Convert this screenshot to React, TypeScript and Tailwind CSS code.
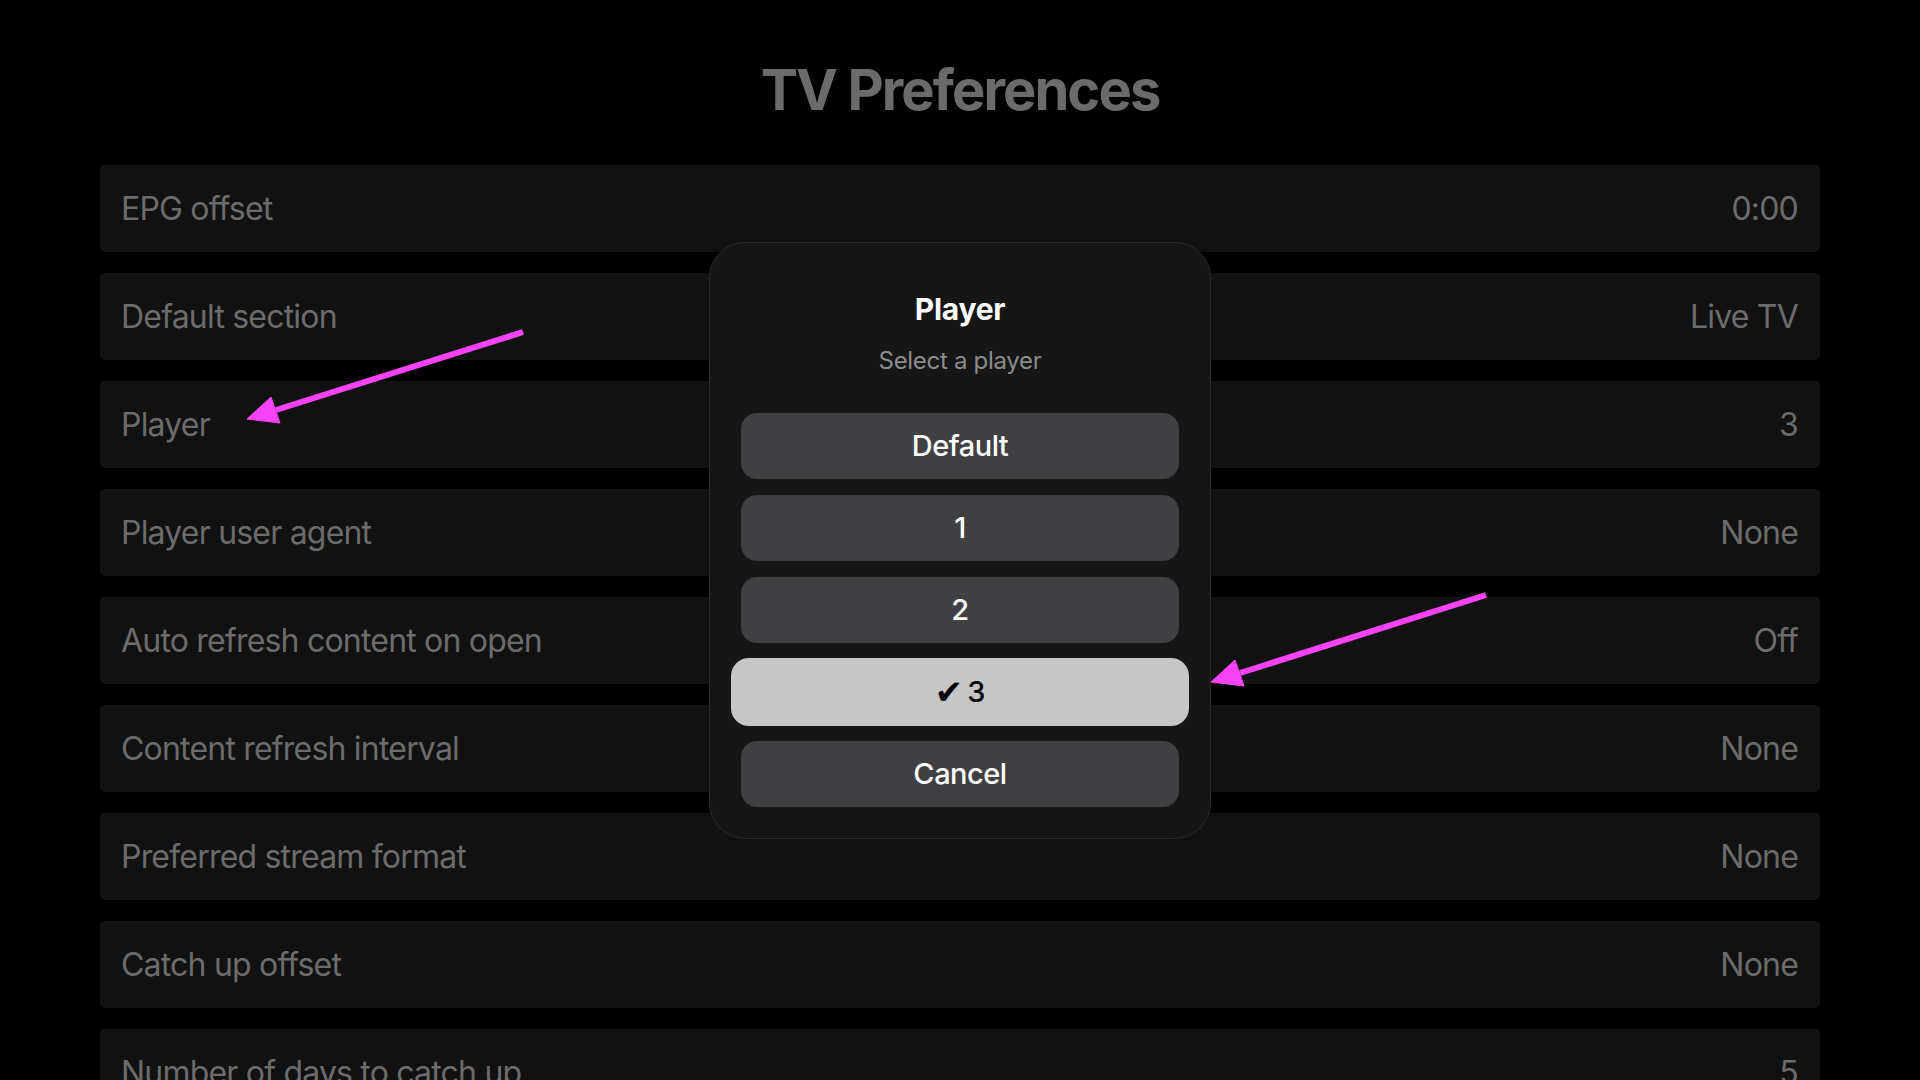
// App.tsx
const rows: [string, string][] = [
  ["EPG offset", "0:00"],
  ["Default section", "Live TV"],
  ["Player", "3"],
  ["Player user agent", "None"],
  ["Auto refresh content on open", "Off"],
  ["Content refresh interval", "None"],
  ["Preferred stream format", "None"],
  ["Catch up offset", "None"],
  ["Number of days to catch up", "5"],
];

const options = ["Default", "1", "2", "3"];
const selected = "3";

function Arrows() {
  // annotation arrows drawn over the screenshot
  return (
    <svg
      className="pointer-events-none absolute inset-0"
      width="1920"
      height="1080"
      viewBox="0 0 1920 1080"
    >
      <g fill="#f743f7" stroke="#f743f7">
        <line x1="523" y1="332" x2="276" y2="410" strokeWidth="6" />
        <polygon points="247,419 280,423 271,397" strokeWidth="1" />
        <line x1="1486" y1="595" x2="1240" y2="673" strokeWidth="6" />
        <polygon points="1211,682 1244,686 1235,660" strokeWidth="1" />
      </g>
    </svg>
  );
}

function PlayerModal() {
  return (
    <div className="absolute inset-0 flex items-center justify-center">
      <div className="flex w-[502px] flex-col rounded-[36px] border border-[#2a2a2a] bg-[#161616] px-[31px] pt-[48px] pb-[31px] text-center">
        <h2 className="text-[30px] leading-[36px] font-bold tracking-[-0.3px] text-white">Player</h2>
        <p className="mt-[19px] text-[24px] leading-[30px] tracking-[-0.3px] text-[#8c8c8c]">Select a player</p>
        <div className="mt-[37px] flex flex-col gap-4">
          {options.map((opt) =>
            opt === selected ? (
              <button
                key={opt}
                className="-mx-[10px] -my-[1px] flex h-[68px] items-center justify-center rounded-[18px] bg-[#c6c6c6] text-[29px] font-medium text-black"
              >
                <span className="mr-[4px] font-['DejaVu_Sans'] text-[34px] leading-none">✔</span>
                {opt}
              </button>
            ) : (
              <button
                key={opt}
                className="flex h-[66px] items-center justify-center rounded-[16px] bg-[#404042] text-[29px] font-medium tracking-[-0.5px] text-white"
              >
                {opt}
              </button>
            )
          )}
          <button className="flex h-[66px] items-center justify-center rounded-[16px] bg-[#404042] text-[29px] font-medium tracking-[-0.5px] text-white">
            Cancel
          </button>
        </div>
      </div>
    </div>
  );
}

export default function App() {
  return (
    <div className="relative h-screen w-full overflow-hidden bg-black font-['Inter',sans-serif]">
      <h1 className="mt-[56px] text-center text-[56px] leading-[68px] font-bold tracking-[-1.9px] text-[#6b6b6b]">
        TV Preferences
      </h1>

      {/* settings list */}
      <div className="mx-[100px] mt-[41px] flex flex-col gap-[21px]">
        {rows.map(([label, value]) => (
          <div
            key={label}
            className="flex h-[87px] shrink-0 items-center justify-between rounded-[5px] bg-[#111111] pr-[22px] pl-[21px] text-[32px] tracking-[-0.8px] text-[#6c6c6c]"
          >
            <span>{label}</span>
            <span>{value}</span>
          </div>
        ))}
      </div>

      <PlayerModal />
      <Arrows />
    </div>
  );
}
